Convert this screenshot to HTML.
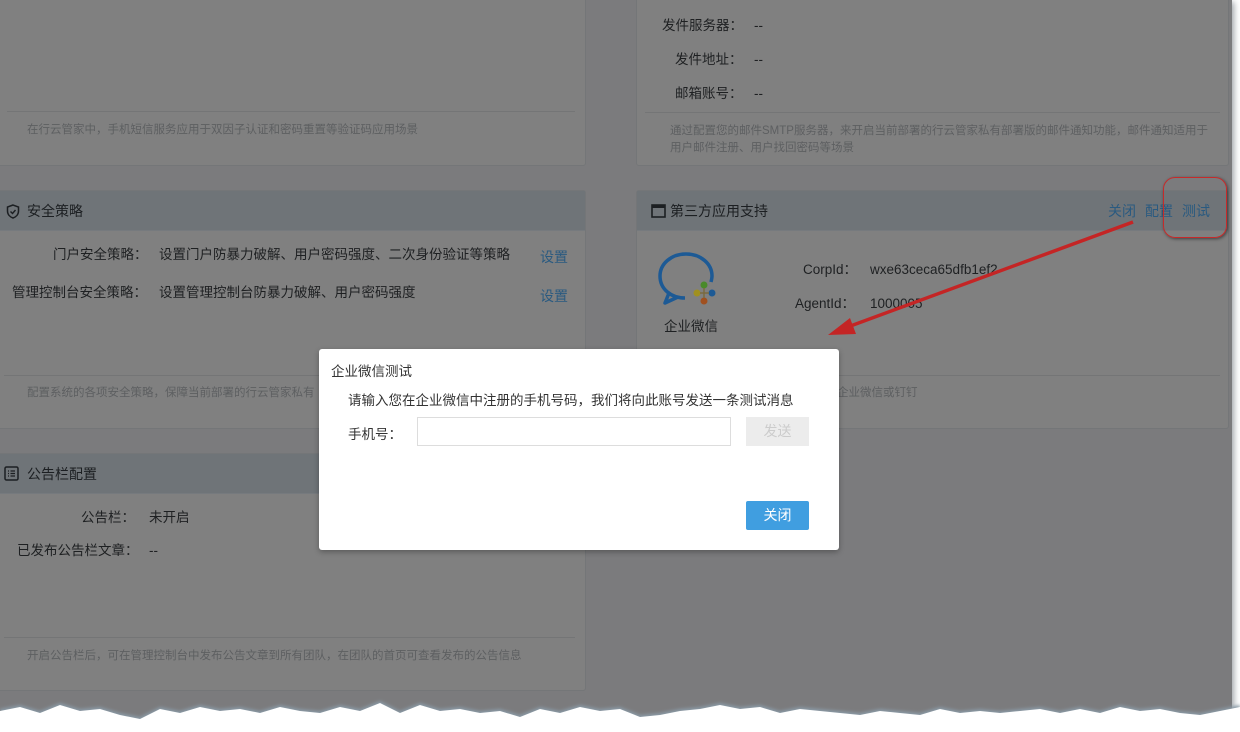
<!DOCTYPE html>
<html><head><meta charset="utf-8"><style>
*{margin:0;padding:0;box-sizing:border-box}
body{width:1240px;height:732px;overflow:hidden;background:#fff;font-family:"Liberation Sans","Noto Sans CJK SC",sans-serif;position:relative}
.bg{position:absolute;left:0;top:0;width:1232px;height:725px;background:#7b7b7d;box-shadow:2px 2px 6px rgba(60,70,80,.5)}
.card{position:absolute;background:#808080;border:1px solid #747678;border-radius:3px}
.hd{position:absolute;left:0;right:0;top:0;height:40px;background:#6f7478;border-bottom:1px solid #767a7e;font-size:14px;color:#1c1f22;line-height:40px}
.t{position:absolute;font-size:13.5px;color:#1e2022;white-space:nowrap;line-height:20px}
.s{position:absolute;font-size:11.5px;color:#5d5f61;white-space:nowrap;line-height:17px}
.ln{position:absolute;height:1px;background:#747576}
.lk{position:absolute;font-size:14px;color:#2a5a80}
</style></head><body>
<div class="bg"></div>
<div class="card" style="left:-4px;top:-10px;width:590px;height:176px">
 <div class="ln" style="left:10px;right:10px;top:120px"></div>
 <div class="s" style="left:30px;top:131px">在行云管家中，手机短信服务应用于双因子认证和密码重置等验证码应用场景</div>
</div>
<div class="card" style="left:636px;top:-10px;width:593px;height:176px">
 <div class="t" style="left:25px;top:25px">发件服务器：</div><div class="t" style="left:117px;top:25px">--</div>
 <div class="t" style="left:38px;top:59px">发件地址：</div><div class="t" style="left:117px;top:59px">--</div>
 <div class="t" style="left:38px;top:93px">邮箱账号：</div><div class="t" style="left:117px;top:93px">--</div>
 <div class="ln" style="left:8px;right:8px;top:121px"></div>
 <div class="s" style="left:33px;top:132px">通过配置您的邮件SMTP服务器，来开启当前部署的行云管家私有部署版的邮件通知功能，邮件通知适用于<br>用户邮件注册、用户找回密码等场景</div>
</div>
<div class="card" style="left:-4px;top:190px;width:590px;height:239px">
 <div class="hd"><svg style="position:absolute;left:9px;top:13px" width="14" height="15" viewBox="0 0 14 15"><path d="M7 1L1.5 3v4c0 3.5 2.5 6 5.5 7 3-1 5.5-3.5 5.5-7V3z" fill="none" stroke="#1c1f22" stroke-width="1.5"/><path d="M4.5 7.5l2 2 3-3.5" fill="none" stroke="#1c1f22" stroke-width="1.4"/></svg><span style="position:absolute;left:30px">安全策略</span></div>
 <div class="t" style="left:56px;top:54px">门户安全策略：</div>
 <div class="t" style="left:162px;top:54px">设置门户防暴力破解、用户密码强度、二次身份验证等策略</div>
 <div class="lk" style="left:543px;top:56px">设置</div>
 <div class="t" style="left:15px;top:92px">管理控制台安全策略：</div>
 <div class="t" style="left:162px;top:92px">设置管理控制台防暴力破解、用户密码强度</div>
 <div class="lk" style="left:543px;top:95px">设置</div>
 <div class="ln" style="left:7px;right:10px;top:184px"></div>
 <div class="s" style="left:30px;top:194px">配置系统的各项安全策略，保障当前部署的行云管家私有</div>
</div>
<div class="card" style="left:636px;top:190px;width:593px;height:239px">
 <div class="hd"><svg style="position:absolute;left:14px;top:13px" width="15" height="14" viewBox="0 0 15 14"><rect x="1" y="1" width="13" height="12" fill="none" stroke="#1c1f22" stroke-width="1.6"/><rect x="1" y="1" width="13" height="3" fill="#1c1f22"/></svg><span style="position:absolute;left:33px">第三方应用支持</span>
 <span class="lk" style="left:471px;top:0">关闭</span><span class="lk" style="left:508px;top:0">配置</span><span class="lk" style="left:545px;top:0">测试</span></div>
 <svg style="position:absolute;left:20px;top:60px" width="70" height="60" viewBox="0 0 70 60"><path d="M28 47C14 47 3 38 3 25 3 13 14 3 29 3s26 10 26 22c0 2-.5 4-1 6" fill="none" stroke="#1d5a95" stroke-width="3.5"/><path d="M12 42l-4 10 13-6" fill="none" stroke="#1d5a95" stroke-width="3.5" stroke-linejoin="round"/><circle cx="47" cy="34" r="3.5" fill="#4a8a2a"/><circle cx="55" cy="42" r="3.5" fill="#1d5a95"/><circle cx="40" cy="42" r="3.5" fill="#a09020"/><circle cx="47" cy="50" r="3.5" fill="#a05020"/><path d="M47 37v10M43 42h9" stroke="#7a6a40" stroke-width="1.5"/></svg>
 <div class="t" style="left:27px;top:126px">企业微信</div>
 <div class="t" style="left:166px;top:69px">CorpId：</div><div class="t" style="left:233px;top:69px">wxe63ceca65dfb1ef2</div>
 <div class="t" style="left:158px;top:103px">AgentId：</div><div class="t" style="left:233px;top:103px">1000005</div>
 <div class="ln" style="left:8px;right:8px;top:184px"></div>
 <div class="s" style="left:200px;top:194px">企业微信或钉钉</div>
</div>
<div class="card" style="left:-4px;top:453px;width:590px;height:238px">
 <div class="hd"><svg style="position:absolute;left:7px;top:12px" width="15" height="15" viewBox="0 0 15 15"><rect x="1" y="1" width="13" height="13" rx="1.5" fill="none" stroke="#1c1f22" stroke-width="1.5"/><path d="M4 5h1M4 7.5h1M4 10h1M6.5 5h4.5M6.5 7.5h4.5M6.5 10h4.5" stroke="#1c1f22" stroke-width="1.3"/></svg><span style="position:absolute;left:30px">公告栏配置</span></div>
 <div class="t" style="left:84px;top:54px">公告栏：</div><div class="t" style="left:152px;top:54px">未开启</div>
 <div class="t" style="left:20px;top:87px">已发布公告栏文章：</div><div class="t" style="left:152px;top:87px">--</div>
 <div class="ln" style="left:7px;right:10px;top:183px"></div>
 <div class="s" style="left:30px;top:194px">开启公告栏后，可在管理控制台中发布公告文章到所有团队，在团队的首页可查看发布的公告信息</div>
</div>
<div style="position:absolute;left:1163px;top:177px;width:64px;height:61px;border:1.5px solid #c62a2a;border-radius:12px;box-shadow:1px 1px 3px rgba(0,0,0,.5)"></div>
<svg style="position:absolute;left:0;top:0" width="1240" height="732"><line x1="1133" y1="222" x2="845" y2="328" stroke="#c42525" stroke-width="3.5"/><polygon points="828,335 850,318 856,334" fill="#c42525"/></svg>
<div style="position:absolute;left:319px;top:349px;width:520px;height:201px;background:#fff;border-radius:3px;box-shadow:0 2px 6px rgba(0,0,0,.3)">
 <div style="position:absolute;left:12px;top:11px;font-size:13.5px;color:#333">企业微信测试</div>
 <div style="position:absolute;left:29px;top:40px;font-size:13.5px;color:#333">请输入您在企业微信中注册的手机号码，我们将向此账号发送一条测试消息</div>
 <div style="position:absolute;left:29px;top:74px;font-size:13.5px;color:#333">手机号：</div>
 <div style="position:absolute;left:98px;top:68px;width:314px;height:29px;border:1px solid #ddd"></div>
 <div style="position:absolute;left:427px;top:68px;width:63px;height:29px;background:#ececec;color:#ccc;font-size:14px;text-align:center;line-height:29px">发送</div>
 <div style="position:absolute;left:427px;top:152px;width:63px;height:29px;background:#409ee0;color:#fff;font-size:14px;text-align:center;line-height:29px;border-radius:2px">关闭</div>
</div>
<svg style="position:absolute;left:0;top:695px" width="1240" height="37"><defs><filter id="b"><feGaussianBlur stdDeviation="1.5"/></filter></defs><polygon fill="#8a9aa6" filter="url(#b)" points="0,14 20,10 40,16 60,8 80,14 100,12 120,18 140,22 160,12 180,16 200,10 220,14 240,12 260,16 280,10 300,14 320,16 340,10 360,14 380,6 400,16 420,8 440,14 460,12 480,16 500,14 520,20 540,12 560,16 580,10 600,14 620,12 640,20 660,18 680,14 700,12 720,8 740,12 760,10 780,16 800,12 820,14 840,16 860,18 880,14 900,16 920,18 940,12 960,16 980,14 1000,16 1020,14 1040,12 1060,16 1080,12 1100,16 1120,10 1140,14 1160,12 1180,16 1200,18 1220,14 1240,10 1240,37 0,37"/><polygon fill="#fff" points="0,16 20,12 40,18 60,10 80,16 100,14 120,20 140,24 160,14 180,18 200,12 220,16 240,14 260,18 280,12 300,16 320,18 340,12 360,16 380,8 400,18 420,10 440,16 460,14 480,18 500,16 520,22 540,14 560,18 580,12 600,16 620,14 640,22 660,20 680,16 700,14 720,10 740,14 760,12 780,18 800,14 820,16 840,18 860,20 880,16 900,18 920,20 940,14 960,18 980,16 1000,18 1020,16 1040,14 1060,18 1080,14 1100,18 1120,12 1140,16 1160,14 1180,18 1200,20 1220,16 1240,12 1240,37 0,37"/></svg>
</body></html>
